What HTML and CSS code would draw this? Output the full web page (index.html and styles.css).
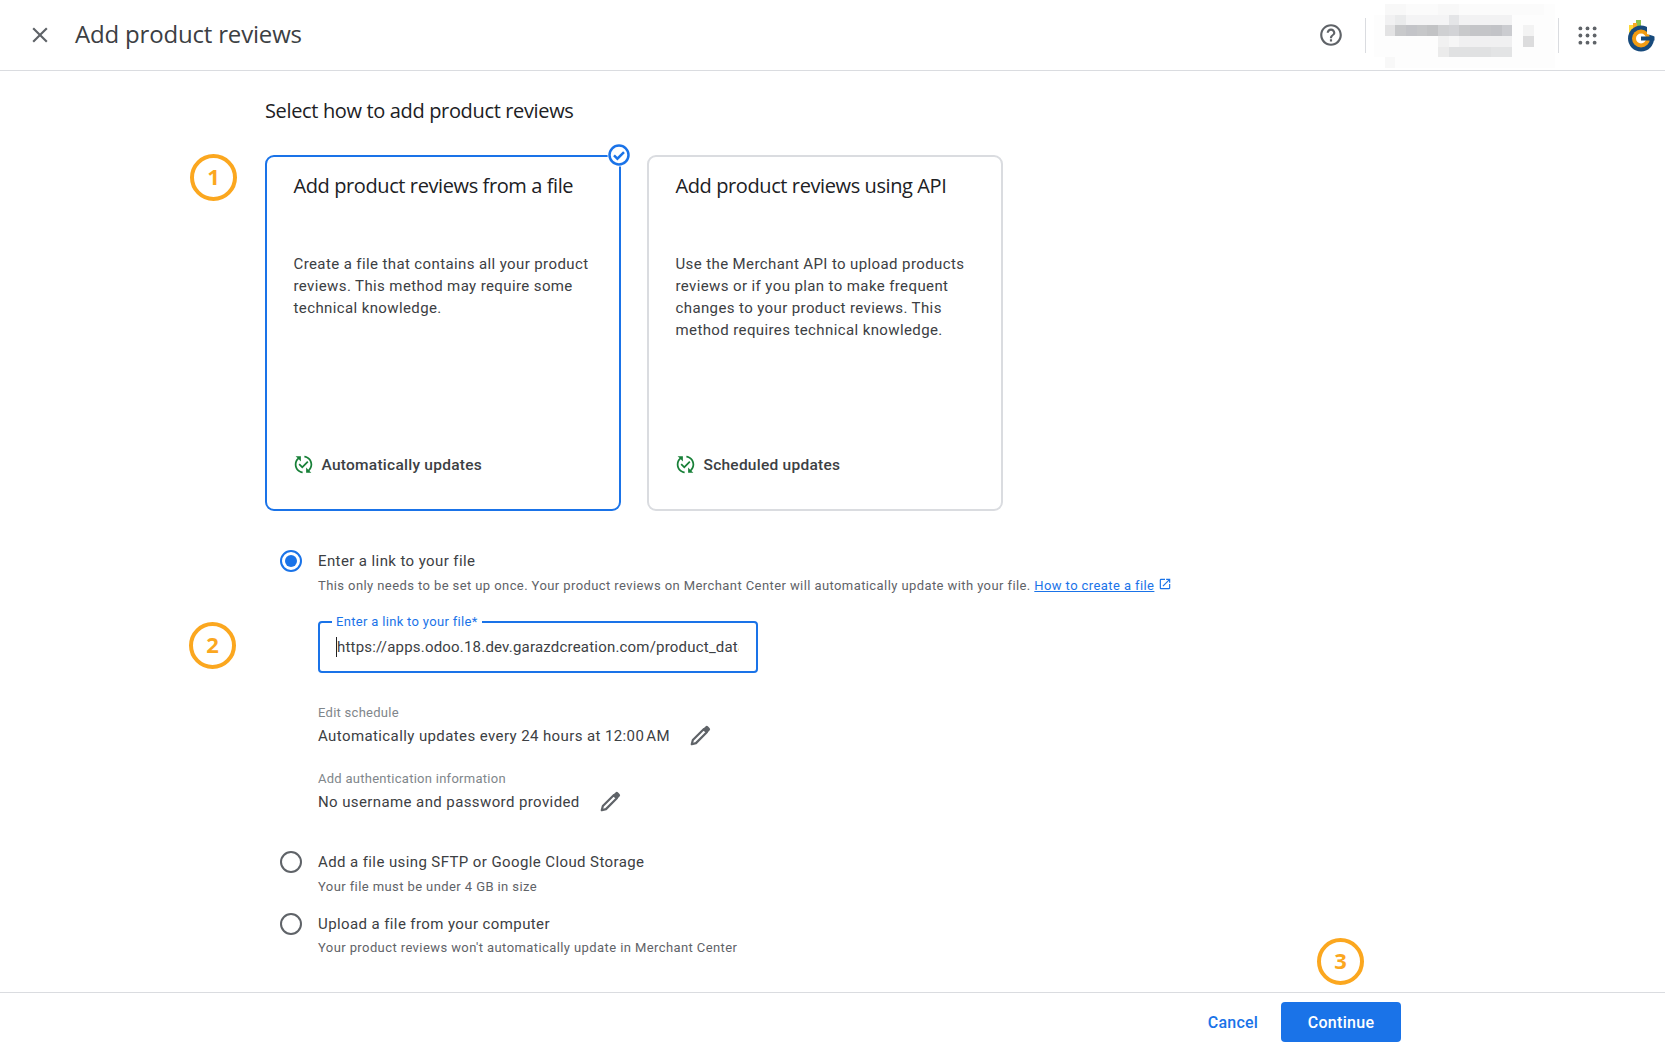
FILE: index.html
```html
<!DOCTYPE html>
<html lang="en">
<head>
<meta charset="utf-8">
<title>Add product reviews</title>
<link rel="stylesheet" href="styles.css">
</head>
<body>
<div class="page">
  <header class="topbar">
    <svg class="close" viewBox="0 0 24 24"><path d="M19 6.41 17.59 5 12 10.59 6.41 5 5 6.41 10.59 12 5 17.59 6.41 19 12 13.41 17.59 19 19 17.59 13.41 12z"/></svg>
    <h1 class="title">Add product reviews</h1>
    <div class="tools">
      <svg class="help" viewBox="0 0 24 24"><path d="M11 18h2v-2h-2v2zm1-16C6.48 2 2 6.48 2 12s4.48 10 10 10 10-4.48 10-10S17.52 2 12 2zm0 18c-4.41 0-8-3.59-8-8s3.59-8 8-8 8 3.59 8 8-3.59 8-8 8zm0-14c-2.21 0-4 1.79-4 4h2c0-1.1.9-2 2-2s2 .9 2 2c0 2-3 1.75-3 5h2c0-2.25 3-2.5 3-5 0-2.21-1.79-4-4-4z"/></svg>
      <span class="sep"></span>
      <svg class="mosaic" viewBox="0 0 17 6" shape-rendering="crispEdges">
        <rect x="1" y="0" width="16" height="6" fill="#fdfdfd"/>
        <rect x="0" y="1" width="17" height="4" fill="#fdfdfd"/>
        <rect x="1" y="0" width="15" height="1" fill="#fbfbfb"/>
        <rect x="1" y="0" width="2" height="1" fill="#f8f8f8"/>
        <rect x="6" y="0" width="2" height="1" fill="#f8f8f8"/>
        <rect x="1" y="1" width="1" height="1" fill="#f1f1f2"/>
        <rect x="2" y="1" width="1" height="1" fill="#eaebec"/>
        <rect x="3" y="1" width="4" height="1" fill="#f4f4f5"/>
        <rect x="7" y="1" width="1" height="1" fill="#e4e5e7"/>
        <rect x="8" y="1" width="5" height="1" fill="#f2f2f3"/>
        <rect x="1" y="2" width="1" height="1" fill="#e3e3e4"/>
        <rect x="2" y="2" width="1" height="1" fill="#c8c9cb"/>
        <rect x="3" y="2" width="1" height="1" fill="#c3c4c8"/>
        <rect x="4" y="2" width="1" height="1" fill="#c6c7c9"/>
        <rect x="5" y="2" width="1" height="1" fill="#c2c3c5"/>
        <rect x="6" y="2" width="1" height="1" fill="#cfd0d2"/>
        <rect x="7" y="2" width="1" height="1" fill="#d2d3d6"/>
        <rect x="8" y="2" width="1" height="1" fill="#c8c9cb"/>
        <rect x="9" y="2" width="2" height="1" fill="#c4c5c8"/>
        <rect x="11" y="2" width="1" height="1" fill="#c2c3c7"/>
        <rect x="12" y="2" width="1" height="1" fill="#cbccd0"/>
        <rect x="14" y="2" width="1" height="1" fill="#f3f3f3"/>
        <rect x="6" y="3" width="1" height="1" fill="#f1f1f1"/>
        <rect x="7" y="3" width="1" height="1" fill="#f6f6f6"/>
        <rect x="8" y="3" width="5" height="1" fill="#f0f0f1"/>
        <rect x="14" y="3" width="1" height="1" fill="#dcdcdd"/>
        <rect x="6" y="4" width="1" height="1" fill="#ebebeb"/>
        <rect x="7" y="4" width="4" height="1" fill="#e0e1e2"/>
        <rect x="11" y="4" width="2" height="1" fill="#e3e4e5"/>
        <rect x="1" y="5" width="1" height="1" fill="#f8f8f8"/>
      </svg>
      <span class="sep sep-right"></span>
      <svg class="apps" viewBox="0 0 20 20"><g><circle cx="2.5" cy="2.5" r="2"/><circle cx="10" cy="2.5" r="2"/><circle cx="17.5" cy="2.5" r="2"/><circle cx="2.5" cy="10" r="2"/><circle cx="10" cy="10" r="2"/><circle cx="17.5" cy="10" r="2"/><circle cx="2.5" cy="17.5" r="2"/><circle cx="10" cy="17.5" r="2"/><circle cx="17.5" cy="17.5" r="2"/></g></svg>
      <svg class="logo" viewBox="0 0 27 32">
        <rect x="8" y="0" width="5" height="8" fill="#8bc34a"/>
        <rect x="1" y="5" width="7" height="8" fill="#fdd835"/>
        <rect x="5" y="3" width="4" height="6" fill="#f9a825"/>
        <circle cx="13" cy="18.5" r="13" fill="#174a7c"/>
        <circle cx="13" cy="18.5" r="9" fill="#f39c12"/>
        <circle cx="13" cy="18.5" r="5" fill="#fff"/>
        <path d="M19 6h8v10.5L19 14z" fill="#fff"/>
        <rect x="13" y="16.5" width="13.5" height="4" fill="#174a7c"/>
      </svg>
    </div>
  </header>

  <main class="content">
    <h2 class="section-title">Select how to add product reviews</h2>

    <div class="cards">
      <article class="card card-selected">
        <h3 class="card-title">Add product reviews from a file</h3>
        <p class="card-text">Create a file that contains all your product reviews. This method may require some technical knowledge.</p>
        <div class="card-foot">
          <svg class="sync" viewBox="0 0 24 24"><path d="M17.66 9.53l-7.07 7.07-4.24-4.24 1.41-1.41 2.83 2.83 5.66-5.66 1.41 1.41zM4 12c0-2.33 1.02-4.42 2.62-5.88L9 8.5v-6H3l2.2 2.2C3.24 6.52 2 9.11 2 12c0 5.19 3.95 9.45 9 9.95v-2.02c-3.94-.49-7-3.86-7-7.93zm18 0c0-5.19-3.95-9.45-9-9.95v2.02c3.94.49 7 3.86 7 7.93 0 2.33-1.02 4.42-2.62 5.88L15 15.5v6h6l-2.2-2.2c1.96-1.82 3.2-4.41 3.2-7.3z"/></svg>
          <span>Automatically updates</span>
        </div>
        <svg class="card-check" viewBox="0 0 24 24"><circle cx="12" cy="12" r="11.5" fill="#fff"/><circle cx="12" cy="12" r="9.5" fill="none" stroke="#1a73e8" stroke-width="2.5"/><path d="M7 12.4l3.4 3.3L17 9.2" fill="none" stroke="#1a73e8" stroke-width="2.5"/></svg>
      </article>
      <article class="card">
        <h3 class="card-title">Add product reviews using API</h3>
        <p class="card-text">Use the Merchant API to upload products reviews or if you plan to make frequent changes to your product reviews. This method requires technical knowledge.</p>
        <div class="card-foot">
          <svg class="sync" viewBox="0 0 24 24"><path d="M17.66 9.53l-7.07 7.07-4.24-4.24 1.41-1.41 2.83 2.83 5.66-5.66 1.41 1.41zM4 12c0-2.33 1.02-4.42 2.62-5.88L9 8.5v-6H3l2.2 2.2C3.24 6.52 2 9.11 2 12c0 5.19 3.95 9.45 9 9.95v-2.02c-3.94-.49-7-3.86-7-7.93zm18 0c0-5.19-3.95-9.45-9-9.95v2.02c3.94.49 7 3.86 7 7.93 0 2.33-1.02 4.42-2.62 5.88L15 15.5v6h6l-2.2-2.2c1.96-1.82 3.2-4.41 3.2-7.3z"/></svg>
          <span>Scheduled updates</span>
        </div>
      </article>
    </div>

    <section class="options">
      <div class="option">
        <span class="radio radio-on"></span>
        <div class="option-body">
          <div class="option-label">Enter a link to your file</div>
          <div class="option-desc">This only needs to be set up once. Your product reviews on Merchant Center will automatically update with your file. <a class="link" href="#">How to create a file</a><svg class="ext" viewBox="0 0 24 24"><path d="M19 19H5V5h7V3H5a2 2 0 0 0-2 2v14a2 2 0 0 0 2 2h14c1.1 0 2-.9 2-2v-7h-2v7zM14 3v2h3.59l-9.83 9.83 1.41 1.41L19 6.41V10h2V3h-7z"/></svg></div>

          <div class="field">
            <span class="field-label">Enter a link to your file*</span>
            <span class="caret"></span>
            <input class="field-input" type="text" value="https://apps.odoo.18.dev.garazdcreation.com/product_data" aria-label="Enter a link to your file">
          </div>

          <div class="meta meta-first">
            <div class="meta-label">Edit schedule</div>
            <div class="meta-row">
              <span>Automatically updates every 24 hours at 12:00&#8202;AM</span>
              <svg class="pencil" viewBox="0 0 24 24"><path d="M3 21l1.2-4.6L16 4.6 19.4 8 7.6 19.8z" fill="none" stroke="#5f6368" stroke-width="2.4" stroke-linejoin="round"/><path d="M15.5 4 18 1.6a2 2 0 0 1 2.8 0l1.6 1.6a2 2 0 0 1 0 2.8L20 8.5z" fill="#5f6368"/></svg>
            </div>
          </div>
          <div class="meta">
            <div class="meta-label">Add authentication information</div>
            <div class="meta-row">
              <span>No username and password provided</span>
              <svg class="pencil" viewBox="0 0 24 24"><path d="M3 21l1.2-4.6L16 4.6 19.4 8 7.6 19.8z" fill="none" stroke="#5f6368" stroke-width="2.4" stroke-linejoin="round"/><path d="M15.5 4 18 1.6a2 2 0 0 1 2.8 0l1.6 1.6a2 2 0 0 1 0 2.8L20 8.5z" fill="#5f6368"/></svg>
            </div>
          </div>
        </div>
      </div>

      <div class="option option-sftp">
        <span class="radio"></span>
        <div class="option-body">
          <div class="option-label">Add a file using SFTP or Google Cloud Storage</div>
          <div class="option-desc">Your file must be under 4 GB in size</div>
        </div>
      </div>

      <div class="option option-upload">
        <span class="radio"></span>
        <div class="option-body">
          <div class="option-label">Upload a file from your computer</div>
          <div class="option-desc">Your product reviews won't automatically update in Merchant Center</div>
        </div>
      </div>
    </section>
  </main>

  <footer class="footer">
    <button class="btn-text" type="button">Cancel</button>
    <button class="btn-primary" type="button">Continue</button>
  </footer>

  <span class="callout callout-1">1</span>
  <span class="callout callout-2">2</span>
  <span class="callout callout-3">3</span>
</div>
</body>
</html>
```
FILE: styles.css
```css
* { box-sizing: border-box; }
html, body { margin: 0; padding: 0; }
body { background: #fff; color: #3c4043; font-family: Roboto, "Liberation Sans", sans-serif; }
.page { position: relative; display: flex; flex-direction: column; width: 1665px; height: 1047px; overflow: hidden; }

.topbar { display: flex; align-items: center; height: 71px; flex: none; padding-left: 27px; border-bottom: 1px solid #dadce0; }
.close { width: 26px; height: 26px; fill: #5f6368; flex: none; }
.title { margin: 0 0 2px 22px; font: 400 24px/32px "Open Sans", sans-serif; letter-spacing: -0.18px; color: #3c4043; }
.tools { display: flex; align-items: center; margin-left: auto; height: 70px; padding-right: 10px; }
.help { width: 26px; height: 26px; margin-right: 1px; fill: #5f6368; flex: none; }
.sep { width: 1px; height: 35px; background: #dadce0; margin-left: 20px; flex: none; }
.mosaic { width: 181px; height: 64px; margin: 2px 0 0 8px; flex: none; }
.sep-right { margin-left: 3px; }
.apps { width: 19px; height: 19px; fill: #5f6368; margin-left: 19px; flex: none; }
.logo { width: 27px; height: 32px; margin: 2px 0 0 31px; flex: none; }

.content { flex: 1; min-height: 0; padding-left: 265px; }
.section-title { margin: 28px 0 0; font: 400 20px/24px "Open Sans", sans-serif; letter-spacing: -0.35px; color: #202124; }

.cards { display: flex; gap: 26px; margin-top: 32px; }
.card { position: relative; display: flex; flex-direction: column; width: 356px; height: 356px; padding: 15px 26px 0 26.5px; border: 2px solid #dadce0; border-radius: 9px; }
.card-selected { border-color: #1a73e8; }
.card-title { margin: 0; font: 400 20px/28px "Open Sans", sans-serif; letter-spacing: -0.4px; color: #202124; }
.card-text { margin: 53px 0 0; font-size: 15px; line-height: 22px; letter-spacing: 0.39px; color: #3c4043; }
.card-foot { display: flex; align-items: center; gap: 7.5px; margin-top: auto; margin-bottom: 34px; margin-left: -0.5px; font-size: 15.5px; font-weight: 500; line-height: 20px; letter-spacing: 0.25px; color: #3c4043; }
.sync { width: 21px; height: 21px; fill: #188038; flex: none; }
.card-check { position: absolute; top: -14px; right: -12px; width: 24px; height: 24px; }

.options { margin: 35px 0 0 15px; }
.option { display: flex; gap: 16px; }
.radio { position: relative; width: 22px; height: 22px; margin-top: 4px; border: 2px solid #5f6368; border-radius: 50%; flex: none; }
.radio-on { border-color: #1a73e8; }
.radio-on::after { content: ""; position: absolute; inset: 3px; border-radius: 50%; background: #1a73e8; }
.option-body { flex: 1; }
.option-label { font-size: 15px; line-height: 22px; letter-spacing: 0.4px; color: #3c4043; margin-top: 4px; }
.option-desc { margin-top: 5px; font-size: 13px; line-height: 18px; letter-spacing: 0.41px; color: #5f6368; }
.link { color: #1a73e8; text-decoration: underline; }
.ext { width: 14px; height: 14px; margin-left: 4px; fill: #1a73e8; vertical-align: -1px; }

.field { position: relative; display: flex; align-items: center; width: 440px; height: 52px; margin-top: 26px; padding: 0 17px; border: 2px solid #1a73e8; border-radius: 4px; }
.field-label { position: absolute; top: -9px; left: 12px; padding: 0 4px; background: #fff; font-size: 13px; line-height: 16px; letter-spacing: 0.32px; color: #1a73e8; }
.field-input { width: 100%; padding: 0; border: 0; outline: 0; background: transparent; font: 400 15px/20px Roboto, sans-serif; letter-spacing: 0.2px; color: #3c4043; }
.caret { position: absolute; left: 16px; top: 14px; width: 1px; height: 20px; background: #202124; }

.meta { margin-top: 21px; }
.meta-first { margin-top: 31px; }
.meta-label { font-size: 13px; line-height: 18px; letter-spacing: 0.27px; color: #80868b; }
.meta-row { display: flex; align-items: center; gap: 19px; margin-top: 1px; height: 26px; font-size: 15px; letter-spacing: 0.4px; color: #3c4043; }
.pencil { width: 22px; height: 22px; flex: none; }

.option-sftp { margin-top: 32px; }
.option-upload { margin-top: 13px; }
.option-upload .option-desc { margin-top: 4px; }

.footer { display: flex; align-items: center; justify-content: flex-end; gap: 23px; height: 55px; flex: none; padding: 4px 264px 0 0; border-top: 1px solid #dadce0; }
.btn-text { padding: 0; border: 0; background: none; font: 500 16px Roboto, sans-serif; letter-spacing: 0.2px; color: #1a73e8; }
.btn-primary { width: 120px; height: 40px; border: 0; border-radius: 4px; background: #1a73e8; font: 500 16px Roboto, sans-serif; letter-spacing: 0.3px; color: #fff; }

.callout { position: absolute; display: flex; align-items: center; justify-content: center; width: 47px; height: 47px; padding-bottom: 3px; border: 4px solid #fba71f; border-radius: 50%; font: 700 22px/1 "Open Sans", sans-serif; color: #fba71f; }
.callout-1 { left: 190px; top: 154px; }
.callout-2 { left: 189px; top: 622px; }
.callout-3 { left: 1317px; top: 938px; }
```
